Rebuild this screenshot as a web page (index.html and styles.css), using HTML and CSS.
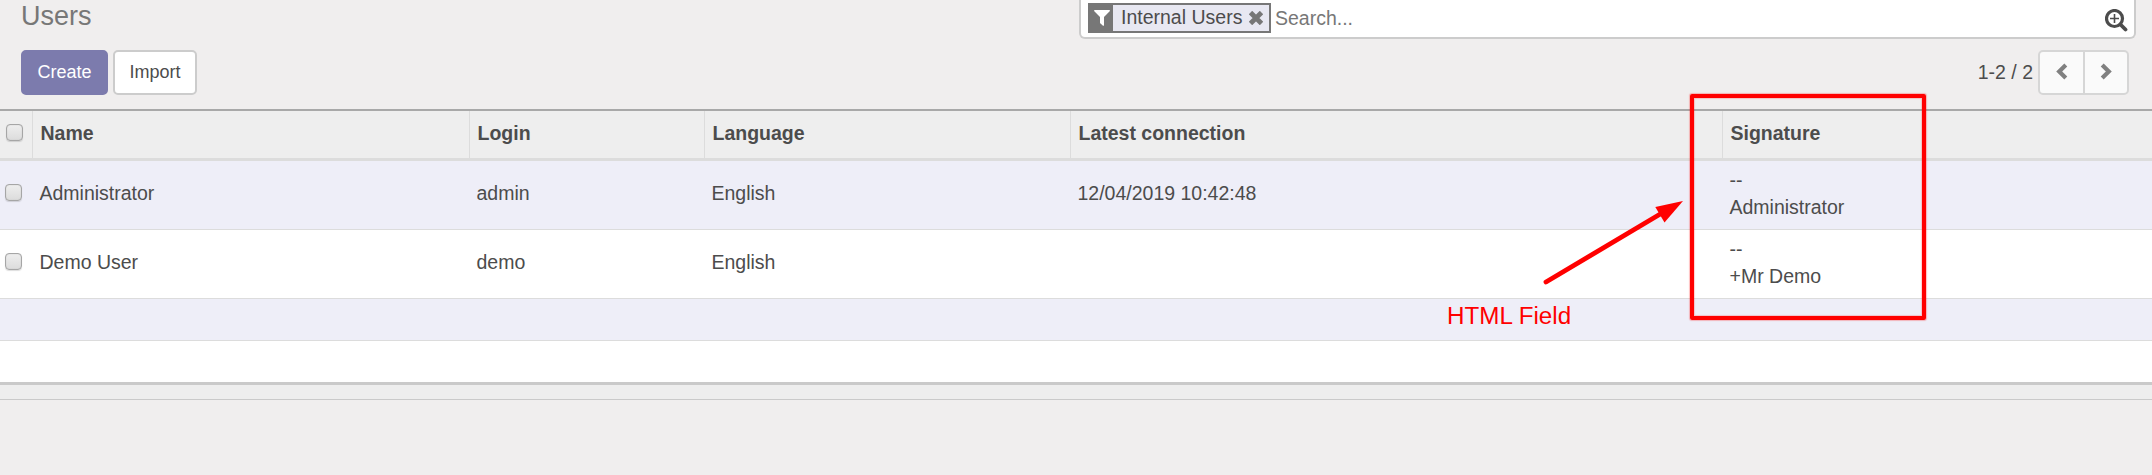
FILE: index.html
```html
<!DOCTYPE html>
<html lang="en">
<head>
<meta charset="utf-8">
<title>Users</title>
<link rel="stylesheet" href="styles.css">
</head>
<body>
<header class="control-panel">
  <div class="panel-row">
    <h1 class="title">Users</h1>
    <div class="search">
      <div class="facet">
        <span class="facet-icon"><svg width="16" height="16" viewBox="0 0 16 16"><path d="M.6 0h14.8q.9.5.3 1.2L10 7v8.2q-.2.8-1 .5L6.200 13.200Q6 13 6 12.500V7L.3 1.200Q-.2.400.6 0z" fill="#fff"/></svg></span>
        <span class="facet-label">Internal Users</span>
        <svg class="facet-remove" width="14" height="14" viewBox="0 0 14 14"><path d="M1.500 1.500l11 11M12.500 1.500L1.500 12.500" stroke="#777" stroke-width="4.800" fill="none"/></svg>
      </div>
      <span class="placeholder">Search...</span>
      <svg class="search-more" width="23" height="23" viewBox="0 0 23 23"><g fill="none" stroke="#4c4c4c"><circle cx="9.500" cy="9.500" r="8" stroke-width="3.200"/><path d="M15.500 15.500l5 5" stroke-width="3.800" stroke-linecap="round"/><path d="M9.500 5v9M5 9.500h9" stroke-width="1.600"/></g></svg>
    </div>
  </div>
  <div class="panel-row actions">
    <div class="buttons">
      <button class="btn primary">Create</button>
      <button class="btn">Import</button>
    </div>
    <div class="pager">
      <span class="range">1-2 / 2</span>
      <div class="pager-group">
        <button class="page-btn"><svg width="12" height="17" viewBox="0 0 12 17"><path d="M9.800 2L3.200 8.500 9.800 15" fill="none" stroke="#808080" stroke-width="4.200"/></svg></button>
        <button class="page-btn"><svg width="12" height="17" viewBox="0 0 12 17"><path d="M2.200 2l6.600 6.500L2.200 15" fill="none" stroke="#808080" stroke-width="4.200"/></svg></button>
      </div>
    </div>
  </div>
</header>
<main class="list">
  <div class="row head">
    <div class="cell check"><span class="box"></span></div>
    <div class="cell">Name</div><div class="cell">Login</div><div class="cell">Language</div><div class="cell">Latest connection</div><div class="cell">Signature</div>
  </div>
  <div class="row record odd">
    <div class="cell check"><span class="box"></span></div>
    <div class="cell">Administrator</div><div class="cell">admin</div><div class="cell">English</div><div class="cell">12/04/2019 10:42:48</div><div class="cell">--<br>Administrator</div>
  </div>
  <div class="row record">
    <div class="cell check"><span class="box"></span></div>
    <div class="cell">Demo User</div><div class="cell">demo</div><div class="cell">English</div><div class="cell"></div><div class="cell">--<br>+Mr Demo</div>
  </div>
  <div class="row empty odd"></div>
  <div class="row empty last"></div>
  <div class="foot"></div>
</main>
<div class="highlight"></div>
<svg class="arrow" width="150" height="100" viewBox="1540 195 150 100"><path d="M1546 282L1662 213" stroke="#f00" stroke-width="4.800" stroke-linecap="round"/><path d="M1683 201l-27.700 6 9.200 15.500z" fill="#f00"/></svg>
<div class="note">HTML Field</div>
</body>
</html>
```
FILE: styles.css
```css
* { box-sizing: border-box; }
body {
  margin: 0;
  height: 475px;
  position: relative;
  overflow: hidden;
  background: #f0eeee;
  color: #4c4c4c;
  font: 19.5px/27px "Liberation Sans", Arial, sans-serif;
}
svg { display: block; flex: none; }
.control-panel {
  height: 111px;
  padding: 0 16px 0 21px;
  border-bottom: 2px solid #a8a8a8;
}
.panel-row { display: flex; justify-content: space-between; align-items: flex-start; height: 50px; }
.title { margin: 0; font-size: 27px; line-height: 32px; font-weight: 400; color: #777; }
.search {
  display: flex;
  align-items: flex-start;
  width: 1057px;
  height: 39px;
  padding: 3px 6px 0 7px;
  background: #fff;
  border: 2px solid #ccc;
  border-top: 0;
  border-radius: 0 0 6px 6px;
}
.facet {
  display: flex;
  align-items: center;
  width: 183px;
  height: 30px;
  background: #e8e8f2;
  border: 2px solid #777;
}
.facet-icon { display: flex; align-items: center; justify-content: center; width: 23px; height: 26px; background: #777; }
.facet-label { margin: 0 7px 1px 8px; white-space: nowrap; }
.placeholder { flex: 1; margin: 2px 0 0 4px; color: #777; }
.search-more { margin: 6px 0 0; }
.actions { height: 45px; padding-right: 7px; }
.buttons { display: flex; gap: 5px; }
.btn {
  width: 84px;
  height: 45px;
  padding: 0;
  font: 18px/41px "Liberation Sans", Arial, sans-serif;
  color: #4c4c4c;
  background: #fff;
  border: 2px solid #ccc;
  border-radius: 5px;
}
.primary { width: 87px; color: #fff; background: #7c7bad; border-color: #7c7bad; }
.pager { display: flex; align-items: center; gap: 5px; }
.range { margin-bottom: 1px; }
.pager-group { display: flex; }
.page-btn {
  display: flex;
  align-items: center;
  justify-content: center;
  width: 47px;
  height: 45px;
  padding: 0 0 3px;
  background: #fafafa;
  border: 2px solid #d6d6d6;
  border-radius: 5px 0 0 5px;
}
.page-btn + .page-btn { width: 46px; margin-left: -2px; border-radius: 0 5px 5px 0; }
.row { display: grid; grid-template-columns: 32px 437px 235px 366px 652px 1fr; background: #fff; border-bottom: 1px solid #dcdcdc; }
.odd { background: #eeeef8; }
.cell { display: flex; align-items: center; padding: 0 0 4px 7.5px; }
.cell:last-child { padding-bottom: 3px; }
.head { height: 50px; background: #eee; border-bottom: 3px solid #dcdcdc; font-weight: 700; }
.head .cell { border-left: 1px solid #dcdcdc; padding-bottom: 3px; }
.head .check { border: 0; padding: 0 0 1px 6px; }
.record { height: 69px; }
.record .check { padding: 0 0 2px 5px; }
.box {
  width: 17px;
  height: 17px;
  margin-bottom: 3px;
  border: 1px solid #a6a6a6;
  border-radius: 4px;
  background: linear-gradient(#eee, #dcdcdc);
  box-shadow: inset 0 0 1px #aaa, 0 1px 1px #0002;
}
.empty { height: 42px; }
.last { height: 44px; border-bottom: 3px solid #cacaca; }
.foot { height: 15px; background: #eee; border-bottom: 1px solid #cacaca; }
.highlight {
  position: absolute;
  left: 1690px;
  top: 94px;
  width: 236px;
  height: 226px;
  border: 4px solid #f00;
  border-radius: 2px;
  box-shadow: 0 0 1px 1px #ff000040, inset 0 0 1px 1px #ff000030;
}
.arrow { position: absolute; left: 1540px; top: 195px; }
.note { position: absolute; left: 1447px; top: 300px; font-size: 24.2px; line-height: 32px; color: #f00; white-space: nowrap; }
```
